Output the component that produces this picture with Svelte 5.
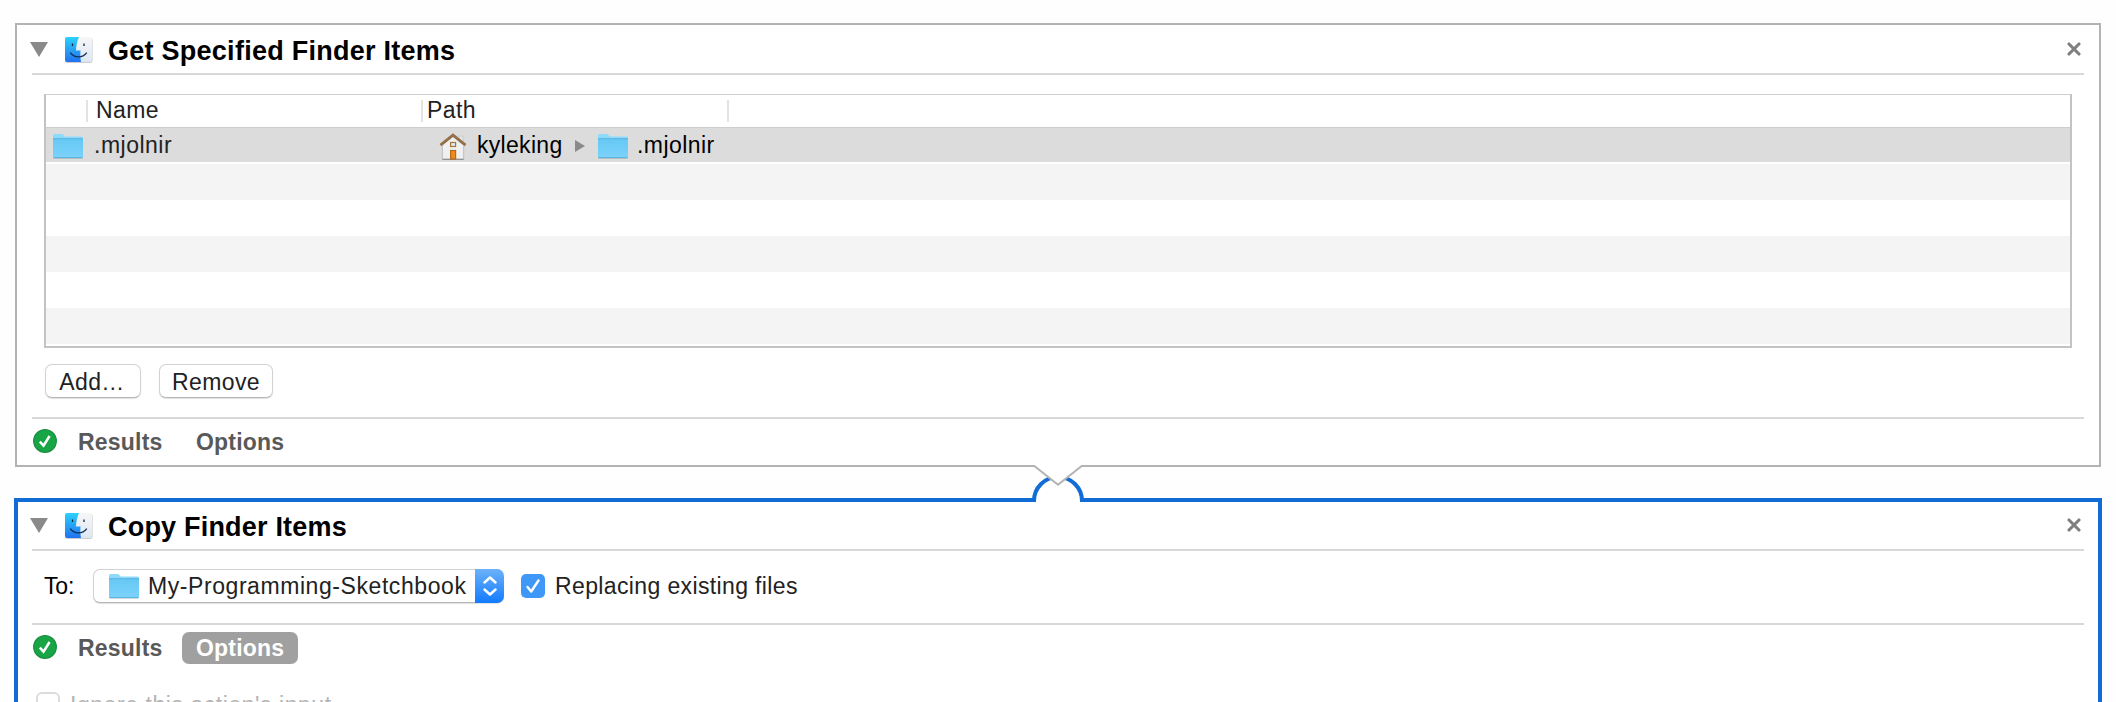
<script>
  const columns = ['', 'Name', 'Path', ''];
  const blankRows = [1, 2, 3, 4, 5];
</script>

{#snippet finderIcon()}
  <svg class="finder" width="30" height="28" viewBox="0 0 30 28">
    <defs>
      <linearGradient id="finder-blue" x1="0" y1="0" x2="0" y2="1">
        <stop offset="0" stop-color="#2bd2fb" />
        <stop offset="1" stop-color="#2272f0" />
      </linearGradient>
      <linearGradient id="finder-white" x1="0" y1="0" x2="0" y2="1">
        <stop offset="0" stop-color="#f7f7f8" />
        <stop offset="1" stop-color="#dce7f3" />
      </linearGradient>
    </defs>
    <rect x="1" y="1.600" width="27.600" height="25.400" rx="2.400" fill="#000" opacity=".2" />
    <rect x="1" y="1" width="27" height="25" rx="2" fill="url(#finder-white)" />
    <path d="M3 1H15C13.2 5 12.2 9 12 14.500H16.500C16.200 18.500 16.300 22 17 26H3Q1 26 1 24V3Q1 1 3 1Z" fill="url(#finder-blue)" />
    <path d="M8.500 7.500V10M20 7.500V10" stroke="#14283f" stroke-width="1.300" fill="none" />
    <path d="M6.300 16.600C10.500 22.300 18.500 22.300 22.800 16.600" stroke="#142f52" stroke-width="1.300" fill="none" />
  </svg>
{/snippet}

{#snippet folderIcon()}
  <svg class="folder" width="32" height="27" viewBox="0 0 32 27">
    <defs>
      <linearGradient id="folder-front" x1="0" y1="0" x2="0" y2="1">
        <stop offset="0" stop-color="#66c8f4" />
        <stop offset="1" stop-color="#7bd2fa" />
      </linearGradient>
    </defs>
    <path d="M1 3Q1 1.5 2.5 1.5H10L13 4.5H29.5Q31 4.5 31 6V24.5Q31 26 29.5 26H2.5Q1 26 1 24.5Z" fill="#000" opacity=".13" />
    <path d="M1 2.5Q1 1 2.5 1H9.6Q10.6 1 11.2 1.8L12.6 3.6H29.5Q31 3.6 31 5.1V23.5Q31 25 29.5 25H2.5Q1 25 1 23.5Z" fill="#8ddafb" />
    <path d="M1 6H31V23.5Q31 24.5 30 24.5H2Q1 24.5 1 23.5Z" fill="url(#folder-front)" />
    <path d="M1 5.7H31M1.4 24.6H30.6" stroke="#56b3de" stroke-width="1" />
  </svg>
{/snippet}

{#snippet passedIcon()}
  <svg class="passed" width="24" height="24" viewBox="0 0 24 24">
    <circle cx="12" cy="12" r="11.3" fill="#18a546" stroke="#1c8f42" stroke-width="1.3" />
    <path d="M6.8 12.7L10.5 16.7L16.6 7" fill="none" stroke="#fff" stroke-width="2.5" />
  </svg>
{/snippet}

{#snippet heading(title)}
  <header>
    <svg class="disclosure" width="18" height="15" viewBox="0 0 18 15"><path d="M0 0H18L9 15Z" fill="#8a8a8a" /></svg>
    {@render finderIcon()}
    <h2>{title}</h2>
    <svg class="close" width="14" height="14" viewBox="0 0 14 14">
      <path d="M2 2L12 12M12 2L2 12" stroke="#7f7f7f" stroke-width="3.1" stroke-linecap="round" />
    </svg>
  </header>
{/snippet}

<main>
  <section class="card source">
    {@render heading('Get Specified Finder Items')}
    <div class="table">
      <div class="row head">
        {#each columns as column}<span>{column}</span>{/each}
      </div>
      <div class="row selected">
        <span class="thumb">{@render folderIcon()}</span>
        <span class="name">.mjolnir</span>
        <span class="path">
          <svg width="28" height="28" viewBox="0 0 28 28">
            <path d="M20 3H24V10H20Z" fill="#e6e6e6" stroke="#c6c6c6" stroke-width=".8" />
            <path d="M3.5 12L14 3L24.500 12V26H3.500Z" fill="#eff0f2" />
            <path d="M3.300 26.300H24.700" stroke="#8e8e8e" stroke-width="1.3" />
            <path d="M3.300 13V26M24.700 13V26" stroke="#b4b4b4" stroke-width=".8" />
            <path d="M1.500 12.200L14 2.200L26.500 12.200" fill="none" stroke="#94704a" stroke-width="3" />
            <rect x="11.600" y="9.500" width="5" height="4" fill="#d8edf9" stroke="#a97335" stroke-width="1.200" />
            <rect x="11.600" y="17.500" width="5" height="8.500" fill="#f08a1c" stroke="#b66a1b" stroke-width="1.200" />
          </svg>
          <span class="crumb">kyleking</span>
          <svg class="arrow" width="10" height="12" viewBox="0 0 10 12"><path d="M0 0L10 6L0 12Z" fill="#8a8a8a" /></svg>
          {@render folderIcon()}
          <span class="crumb">.mjolnir</span>
        </span>
      </div>
      {#each blankRows as row (row)}<div class="row blank"></div>{/each}
    </div>
    <div class="buttons">
      <button class="add">Add…</button>
      <button class="remove">Remove</button>
    </div>
    <footer>
      {@render passedIcon()}
      <span class="tab">Results</span>
      <span class="tab options">Options</span>
    </footer>
  </section>

  <section class="card active">
    <svg class="connector" width="56" height="37" viewBox="0 0 56 37">
      <path d="M6 37V35A22 22 0 0 1 50 35V37Z" fill="#fff" />
      <path d="M4 37V36A24 24 0 0 1 52 36V37" fill="none" stroke="#116cd6" stroke-width="4" />
      <path d="M4.300 0H51.700V1L28 19.800L4.300 1Z" fill="#fff" />
      <path d="M2 1H4.300L28 19.800L51.700 1H54" fill="none" stroke="#b3b3b3" stroke-width="2" />
    </svg>
    {@render heading('Copy Finder Items')}
    <div class="destination">
      <span class="to">To:</span>
      <div class="select">
        {@render folderIcon()}
        <span class="value">My-Programming-Sketchbook</span>
        <span class="stepper">
          <svg width="14" height="20" viewBox="0 0 14 20">
            <path d="M1.500 6.500L7 1.500L12.500 6.500M1.500 13.500L7 18.500L12.500 13.500" fill="none" stroke="#fff" stroke-width="2.400" stroke-linecap="round" stroke-linejoin="round" />
          </svg>
        </span>
      </div>
      <svg class="check" width="24" height="24" viewBox="0 0 24 24">
        <rect width="24" height="24" rx="5" fill="#3f98f8" />
        <path d="M6.500 13L10.200 17.500L17.500 6.500" fill="none" stroke="#fff" stroke-width="2.400" stroke-linecap="round" stroke-linejoin="round" />
      </svg>
      <span class="label">Replacing existing files</span>
    </div>
    <footer>
      {@render passedIcon()}
      <span class="tab">Results</span>
      <span class="tab options on">Options</span>
    </footer>
    <div class="ignore">
      <span class="box"></span>
      <span>Ignore this action's input</span>
    </div>
  </section>
</main>

<style>
  :global(body) { background: #fff; }
  main {
    box-sizing: border-box;
    height: 702px;
    overflow: hidden;
    padding: 23px 14px 0;
    font: 23px/26px "Liberation Sans", Arial, sans-serif;
    letter-spacing: .4px;
    color: #222;
    background: #fefefe;
  }
  svg { display: block; flex: none; }
  .card { box-sizing: border-box; background: #fff; position: relative; }
  .source { height: 444px; margin: 0 1px 31px; border: 2px solid #b3b3b3; padding: 0 15px; }
  .active { height: 260px; border: 4px solid #116cd6; padding: 0 14px; }
  header {
    box-sizing: border-box;
    height: 50px;
    display: flex;
    align-items: flex-start;
    border-bottom: 2px solid #d8d8d8;
  }
  .active header { height: 49px; }
  .disclosure { margin: 17px 0 0 -2px; }
  .finder { margin: 11px 0 0 16px; }
  h2 {
    margin: 11px 0 0 14px;
    flex: 1;
    font-size: 27px;
    line-height: 30px;
    font-weight: bold;
    letter-spacing: .26px;
    color: #000;
  }
  .close { margin: 17px 3px 0 0; }
  .active .disclosure { margin-top: 16px; }
  .active .finder { margin-top: 10px; }
  .active h2 { margin-top: 10px; letter-spacing: .2px; }
  .active .close { margin-top: 16px; }
  .table {
    box-sizing: border-box;
    height: 254px;
    margin: 19px 12px 0;
    border: 2px solid #c3c3c3;
    border-top: 1px solid #cfcfcf;
  }
  .row { display: grid; grid-template-columns: 42px 335px 306px 1fr; height: 36px; }
  .head { height: 32px; padding-top: 5px; box-sizing: border-box; }
  .head span { height: 22px; line-height: 21px; border-right: 2px solid #e3e3e3; box-sizing: border-box; padding-left: 6px; letter-spacing: .4px; }
  .head span:nth-child(2) { padding-left: 8px; }
  .head span:nth-child(3) { padding-left: 4px; }
  .head span:last-child { border: 0; }
  .selected {
    box-sizing: border-box;
    height: 35px;
    margin-bottom: 2px;
    border-top: 1px solid #cdcdcd;
    background: #dcdcdc;
  }
  .thumb { padding: 5px 0 0 6px; }
  .name { padding: 4px 0 0 6px; letter-spacing: .5px; }
  .path { display: flex; align-items: flex-start; padding: 5px 0 0 16px; color: #000; }
  .crumb { margin: -1px 0 0 8px; letter-spacing: .45px; }
  .path .crumb:nth-of-type(1) { width: 86px; margin-left: 10px; letter-spacing: .3px; }
  .arrow { margin: 7px 12px 0 12px; }
  .blank:nth-child(odd) { background: #f4f4f4; }
  .buttons { display: flex; gap: 18px; margin: 16px 13px 0; }
  button {
    box-sizing: border-box;
    height: 34px;
    padding: 2px 0 0;
    font: inherit;
    letter-spacing: inherit;
    color: #222;
    background: #fff;
    border: 1px solid #d2d2d2;
    border-bottom-color: #b6b6b6;
    border-radius: 7px;
    box-shadow: 0 1px 1px rgba(0, 0, 0, .12);
  }
  .add { width: 96px; padding-right: 2px; }
  .remove { width: 114px; }
  footer {
    display: flex;
    align-items: flex-start;
    box-sizing: border-box;
    margin-top: 19px;
    padding: 7px 0 0 1px;
    border-top: 2px solid #d8d8d8;
    height: 48px;
    font-weight: bold;
    letter-spacing: .2px;
    color: #595959;
  }
  .passed { margin-top: 3px; margin-right: 21px; }
  .tab { width: 85px; height: 32px; line-height: 33px; }
  .options { box-sizing: border-box; width: 116px; margin-left: 19px; padding: 0 14px; letter-spacing: .2px; }
  .on { color: #fff; background: #a0a0a0; border-radius: 7px; }
  .connector { position: absolute; left: 1012px; top: -37px; }
  .destination { display: flex; align-items: center; height: 34px; margin: 18px 12px 0; }
  .to { width: 49px; letter-spacing: -.2px; color: #000; }
  .select {
    box-sizing: border-box;
    width: 411px;
    height: 34px;
    display: flex;
    align-items: center;
    padding-left: 14px;
    background: #fff;
    border: 1px solid #d2d2d2;
    border-right: 0;
    border-bottom-color: #b6b6b6;
    border-radius: 7px;
    box-shadow: 0 1px 1px rgba(0, 0, 0, .12);
  }
  .value { margin-left: 8px; flex: 1; white-space: nowrap; letter-spacing: .57px; }
  .stepper {
    width: 29px;
    height: 34px;
    margin: -1px 0;
    display: grid;
    place-items: center;
    background: linear-gradient(#6cb2f9, #127bff);
    border-radius: 0 7px 7px 0;
  }
  .check { margin: 0 10px 0 17px; }
  .label { letter-spacing: .37px; }
  .active footer { margin-top: 20px; }
  .ignore { display: flex; align-items: flex-start; margin: 21px 0 0 4px; color: #b4b4b4; letter-spacing: .55px; }
  .box {
    box-sizing: border-box;
    width: 24px;
    height: 24px;
    margin-right: 10px;
    border: 2px solid #dcdcdc;
    border-radius: 6px;
  }
</style>
